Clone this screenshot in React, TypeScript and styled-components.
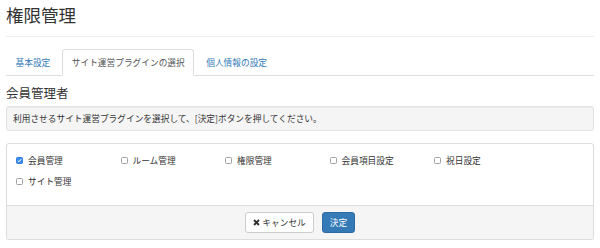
import React, { useState } from 'react';
import styled, { createGlobalStyle } from 'styled-components';

const GlobalStyle = createGlobalStyle`
  html, body {
    margin: 0;
    padding: 0;
    background: #fff;
  }
  body {
    font-family: "Noto Sans CJK JP", "Liberation Sans", sans-serif;
    color: #333;
  }
`;

const tabs = ['基本設定', 'サイト運営プラグインの選択', '個人情報の設定'];

const plugins = [
  { name: '会員管理', checked: true },
  { name: 'ルーム管理', checked: false },
  { name: '権限管理', checked: false },
  { name: '会員項目設定', checked: false },
  { name: '祝日設定', checked: false },
  { name: 'サイト管理', checked: false },
];

const App = () => {
  const [active, setActive] = useState(1);
  const [items, setItems] = useState(plugins);

  const toggle = (i: number) => {
    setItems(items.map((item, idx) => (idx === i ? { ...item, checked: !item.checked } : item)));
  };

  return (
    <Page>
      <GlobalStyle />
      <Title>権限管理</Title>
      <TabNav>
        {tabs.map((t, i) => (
          <Tab key={t} $active={i === active} onClick={() => setActive(i)}>
            {t}
          </Tab>
        ))}
      </TabNav>
      <SubHeading>会員管理者</SubHeading>
      <Well>利用させるサイト運営プラグインを選択して、[決定]ボタンを押してください。</Well>
      <Panel>
        <PanelBody>
          {items.map((item, i) => (
            <CheckLabel key={item.name} onClick={() => toggle(i)}>
              <CheckBox $checked={item.checked}>
                {item.checked && (
                  <svg width="5" height="5" viewBox="0 0 10 10">
                    <path d="M1.5 5.2 L4 7.6 L8.6 2.2" fill="none" stroke="#fff" strokeWidth="2" />
                  </svg>
                )}
              </CheckBox>
              {item.name}
            </CheckLabel>
          ))}
        </PanelBody>
        <PanelFooter>
          <Button>
            <svg width="7" height="7" viewBox="0 0 10 10">
              <path d="M1.5 1.5 L8.5 8.5 M8.5 1.5 L1.5 8.5" stroke="#333" strokeWidth="2.8" />
            </svg>
            キャンセル
          </Button>
          <Button $primary>決定</Button>
        </PanelFooter>
      </Panel>
    </Page>
  );
};

export default App;

const Page = styled.div`
  padding: 0 6px;
  width: 588px;
`;

const Title = styled.h1`
  margin: 0;
  font-size: 17.5px;
  font-weight: 400;
  line-height: 30px;
  padding-bottom: 6px;
  border-bottom: 1px solid #eee;
  color: #333;
`;

const TabNav = styled.div`
  display: flex;
  margin-top: 12px;
  border-bottom: 1px solid #ddd;
`;

const Tab = styled.div<{ $active?: boolean }>`
  height: 27px;
  box-sizing: border-box;
  margin-bottom: -1px;
  margin-right: 2.5px;
  padding: 0 8.5px;
  line-height: 25px;
  font-size: 8.7px;
  border: 1px solid transparent;
  border-radius: 3px 3px 0 0;
  cursor: pointer;
  color: ${(p) => (p.$active ? '#555' : '#337ab7')};
  background: ${(p) => (p.$active ? '#fff' : 'transparent')};
  border-color: ${(p) => (p.$active ? '#ddd #ddd transparent' : 'transparent')};
`;

const SubHeading = styled.h2`
  margin: 7px 0 3px;
  font-size: 12.5px;
  font-weight: 400;
  line-height: 20px;
  color: #333;
`;

const Well = styled.div`
  height: 25px;
  box-sizing: border-box;
  padding: 0 6px;
  line-height: 23px;
  font-size: 8.7px;
  background: #f5f5f5;
  border: 1px solid #e3e3e3;
  border-radius: 3px;
  box-shadow: inset 0 1px 1px rgba(0, 0, 0, 0.05);
`;

const Panel = styled.div`
  margin-top: 12px;
  border: 1px solid #ddd;
  border-radius: 3px;
  background: #fff;
  box-shadow: 0 1px 1px rgba(0, 0, 0, 0.05);
`;

const PanelBody = styled.div`
  display: grid;
  grid-template-columns: repeat(5, 104.5px);
  grid-auto-rows: 21px;
  padding: 6px 9px 13px;
`;

const CheckLabel = styled.label`
  display: flex;
  align-items: center;
  gap: 5px;
  font-size: 8.7px;
  color: #333;
  cursor: pointer;
`;

const CheckBox = styled.span<{ $checked?: boolean }>`
  display: inline-flex;
  align-items: center;
  justify-content: center;
  width: 7px;
  height: 7px;
  box-sizing: border-box;
  border-radius: 1.5px;
  border: 1px solid ${(p) => (p.$checked ? '#2f7de1' : '#a0a0a0')};
  background: ${(p) => (p.$checked ? '#3b8cf0' : '#fff')};
`;

const PanelFooter = styled.div`
  display: flex;
  justify-content: center;
  align-items: center;
  gap: 8px;
  height: 33px;
  background: #f5f5f5;
  border-top: 1px solid #ddd;
  border-radius: 0 0 3px 3px;
`;

const Button = styled.button<{ $primary?: boolean }>`
  display: inline-flex;
  align-items: center;
  gap: 2.5px;
  height: 21px;
  padding: 0 7px;
  font-family: inherit;
  font-size: 8.7px;
  border-radius: 3px;
  cursor: pointer;
  color: ${(p) => (p.$primary ? '#fff' : '#333')};
  background: ${(p) => (p.$primary ? '#337ab7' : '#fff')};
  border: 1px solid ${(p) => (p.$primary ? '#2e6da4' : '#ccc')};
`;
